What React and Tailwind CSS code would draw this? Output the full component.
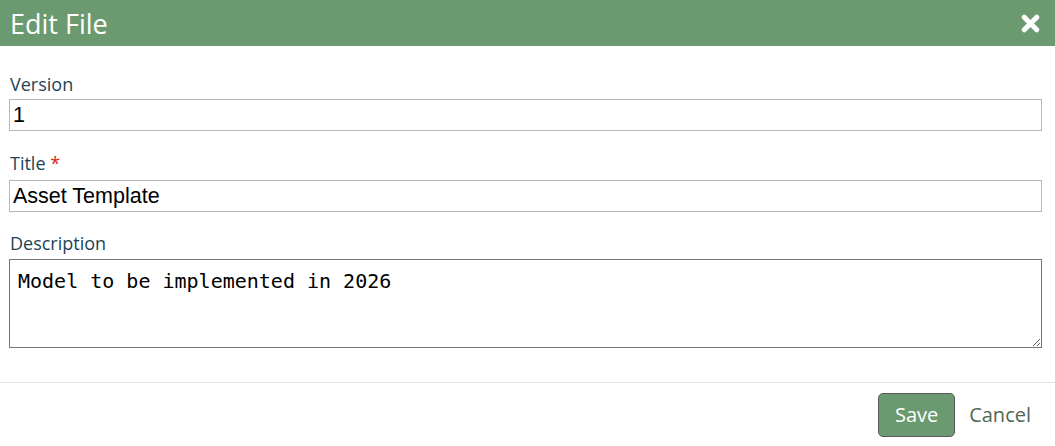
// Edit File dialog
import { X } from "lucide-react";

export default function App() {
  return (
    <div className="w-[1055px] h-[446px] bg-white font-['Open_Sans',sans-serif] overflow-hidden">
      {/* Header */}
      <div className="h-[46px] bg-[#6b9a70] flex items-center justify-between pl-[10px] pr-[12px]">
        <h1 className="text-[27px] text-white leading-none">Edit File</h1>
        <X className="w-[25px] h-[25px] text-white" strokeWidth={5} />
      </div>

      {/* Body */}
      <div className="pl-[9px] pr-[13px] pt-[28px] h-[336px]">
        <label className="block text-[18px] leading-[21px] text-[#1d4454] pl-px mb-[4px]">Version</label>
        <input
          defaultValue="1"
          className="block w-full h-[32px] border border-[#b7b7b7] px-[3px] text-[21.5px] text-black font-['Liberation_Sans',sans-serif] outline-none"
        />

        <label className="block text-[18px] leading-[21px] text-[#1d4454] pl-px mt-[22px] mb-[6px]">
          Title <span className="text-[#e02020]">*</span>
        </label>
        <input
          defaultValue="Asset Template"
          className="block w-full h-[32px] border border-[#b7b7b7] px-[3px] text-[21.5px] text-black font-['Liberation_Sans',sans-serif] outline-none"
        />

        <label className="block text-[18px] leading-[21px] text-[#1d4454] pl-px mt-[21px] mb-[5px]">Description</label>
        <textarea
          defaultValue="Model to be implemented in 2026"
          className="block w-full h-[89px] border border-[#767676] px-[8px] py-[8px] text-[20px] leading-[26px] text-black font-['DejaVu_Sans_Mono',monospace] outline-none resize-y"
        />
      </div>

      {/* Footer */}
      <div className="border-t border-[#e2e2e2] flex items-center justify-end pt-[10px] pr-[24px] gap-[14px]">
        <button className="w-[77px] h-[44px] bg-[#6b9a70] border border-[#5a5a5a] rounded-[5px] text-white text-[20px]">
          Save
        </button>
        <button className="text-[20px] text-[#4f6755]">Cancel</button>
      </div>
    </div>
  );
}
